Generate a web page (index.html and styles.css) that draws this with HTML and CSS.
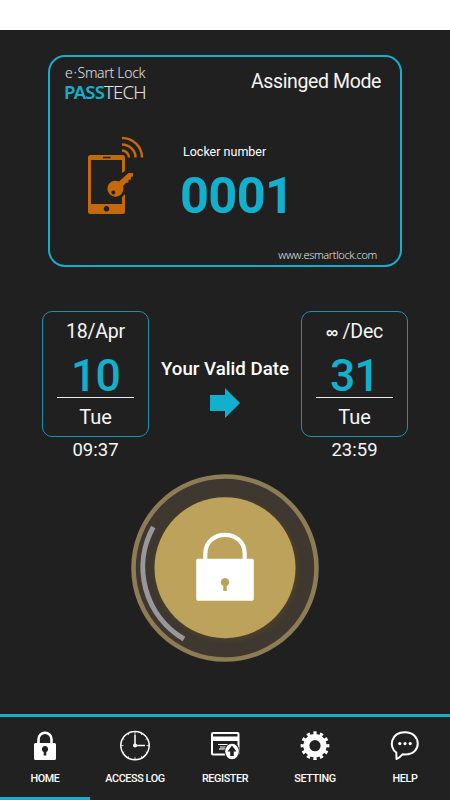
FILE: index.html
```html
<!DOCTYPE html>
<html lang="en">
<head>
<meta charset="utf-8">
<meta name="viewport" content="width=device-width">
<title>e-Smart Lock</title>
<link rel="stylesheet" href="styles.css">
</head>
<body>
<div class="status"></div>
<main>
  <section class="card">
    <header class="card-top">
      <div class="brand">
        <div class="brand-sub">e<span class="dot">·</span>Smart Lock</div>
        <div class="brand-name"><b>PASS</b>TECH</div>
      </div>
      <div class="mode">Assinged Mode</div>
    </header>
    <div class="locker">
      <svg class="phone" width="58" height="80" viewBox="0 0 58 80">
        <path fill="currentColor" fill-rule="evenodd" d="M2.500 19H34.500Q37 19 37 21.500V35L34 37V24H3V68H34V61L37 58V75.500Q37 78 34.500 78H2.500Q0 78 0 75.500V21.500Q0 19 2.500 19ZM15 20.700V22.300H22.500V20.700ZM18.500 70A2.800 2.800 0 1 0 18.510 70Z"/>
        <path fill="currentColor" fill-rule="evenodd" d="M31 45.500L40.500 37H45V40.500L43 41V43.500L40.500 44V46.500L38 47L35 50A8 8 0 1 1 31 45.500ZM25.300 54.500A2 2 0 1 0 25.310 54.500Z"/>
        <path fill="none" stroke="currentColor" stroke-width="2.500" d="M34 14.500A7 7 0 0 1 41 21.500M34 8.500A14 13 0 0 1 47.500 21.500M34 2A20 19.500 0 0 1 54 21.500"/>
      </svg>
      <div class="locker-info">
        <div class="locker-label">Locker number</div>
        <div class="locker-no">0001</div>
      </div>
    </div>
    <div class="url">www.esmartlock.com</div>
  </section>

  <section class="dates">
    <div class="date">
      <div class="date-box">
        <div class="month">18/Apr</div>
        <div class="day">10</div>
        <div class="weekday">Tue</div>
      </div>
      <div class="time">09:37</div>
    </div>
    <div class="valid">
      <div class="valid-text">Your Valid Date</div>
      <svg width="30" height="30" viewBox="0 0 30 30"><path fill="#13b0cd" d="M0 7H15V0L30 15L15 30V23H0Z"/></svg>
    </div>
    <div class="date">
      <div class="date-box">
        <div class="month"><span class="infinity">∞</span> /Dec</div>
        <div class="day">31</div>
        <div class="weekday">Tue</div>
      </div>
      <div class="time">23:59</div>
    </div>
  </section>

  <svg class="lock-button" width="190" height="190" viewBox="0 0 190 190">
    <defs>
      <filter id="glow" x="-20%" y="-20%" width="140%" height="140%"><feGaussianBlur stdDeviation="3"/></filter>
    </defs>
    <circle cx="95" cy="95" r="91.500" fill="#3e3830" stroke="#8e7c55" stroke-width="4.600"/>
    <circle cx="96.500" cy="96.500" r="70" fill="#66531f" opacity=".5" filter="url(#glow)"/>
    <circle cx="95" cy="94.700" r="70.500" fill="#bda25c"/>
    <path fill="none" stroke="#98979a" stroke-width="5" d="M23.300 54A83 83 0 0 0 54 166"/>
    <path fill="none" stroke="#fff" stroke-width="4.200" d="M75.300 87V81C75.300 55.500 114.700 55.500 114.700 81V87"/>
    <rect x="66.200" y="85.800" width="57.600" height="42" rx="1.800" fill="#fff"/>
    <path fill="#bda25c" d="M93.300 113A4.200 4.200 0 1 1 96.700 113V118H93.300Z"/>
  </svg>
</main>

<nav>
  <a class="tab active">
    <svg width="32" height="32" viewBox="0 0 32 32">
      <path fill="none" stroke="#fff" stroke-width="2.600" d="M9.500 14V9.200A6.500 6.500 0 0 1 22.500 9.200V14"/>
      <path fill="#fff" fill-rule="evenodd" d="M6.500 13H25.500Q27 13 27 14.500V28.500Q27 30 25.500 30H6.500Q5 30 5 28.500V14.500Q5 13 6.500 13ZM14.700 22V25.500H17.300V22A3.100 3.100 0 1 0 14.700 22Z"/>
    </svg>
    <span>HOME</span>
  </a>
  <a class="tab">
    <svg width="32" height="32" viewBox="0 0 32 32" fill="none" stroke="#fff">
      <circle cx="16" cy="15.600" r="14.200" stroke-width="1.500"/>
      <path stroke-width="1.500" d="M16 4.500V15.600H26"/>
      <path stroke-width="1" opacity=".75" d="M16 2V4M16 27V29.500M2 15.600H4.500M27.500 15.600H30M9 3.500L9.700 5M23 3.500L22.300 5M4 8.600L5.300 9.400M28 8.600L26.700 9.400M4 22.600L5.300 21.800M28 22.600L26.700 21.800M9 27.700L9.700 26.200M23 27.700L22.300 26.200"/>
      <circle cx="16" cy="15.600" r="2" fill="#fff" stroke="none"/>
    </svg>
    <span>ACCESS LOG</span>
  </a>
  <a class="tab">
    <svg width="32" height="32" viewBox="0 0 32 32">
      <rect x="3" y="3" width="26.500" height="21.500" rx="1" fill="none" stroke="#fff" stroke-width="2"/>
      <path fill="#fff" d="M3 6.500H29V11H3Z"/>
      <path stroke="#fff" stroke-width="1.200" d="M9 14.500H19M11 17H18"/>
      <path stroke="#fff" stroke-width="1.200" d="M10 19H16"/>
      <ellipse cx="23" cy="21.500" rx="7.700" ry="8.700" fill="#212121"/>
      <ellipse cx="23" cy="21.500" rx="6.800" ry="7.800" fill="#fff"/>
      <path fill="#212121" d="M23 15.500L27.500 21.500H24.800V26H21.200V21.500H18.500Z"/>
    </svg>
    <span>REGISTER</span>
  </a>
  <a class="tab">
    <svg width="32" height="32" viewBox="0 0 32 32" fill="none" stroke="#fff">
      <circle cx="16" cy="15.700" r="8.600" stroke-width="6"/>
      <circle cx="16" cy="15.700" r="12.200" stroke-width="4.300" pathLength="24" stroke-dasharray="1 1" stroke-dashoffset=".5"/>
    </svg>
    <span>SETTING</span>
  </a>
  <a class="tab">
    <svg width="32" height="32" viewBox="0 0 32 32">
      <path fill="none" stroke="#fff" stroke-width="2" stroke-linejoin="round" d="M7.300 22.500C-.5 17.500 1.500 2.300 16 2.300C32.500 2.300 33.500 24.500 16 24.500L13.500 24.300C11.500 26.500 10 28 7.500 29Z"/>
      <g fill="#fff"><circle cx="10.800" cy="13.600" r="1.600"/><circle cx="16" cy="13.600" r="1.600"/><circle cx="21.200" cy="13.600" r="1.600"/></g>
    </svg>
    <span>HELP</span>
  </a>
</nav>
</body>
</html>
```

FILE: styles.css
```css
* { box-sizing: border-box; }

body {
  margin: 0;
  width: 450px;
  height: 800px;
  display: flex;
  flex-direction: column;
  overflow: hidden;
  background: #202020;
  color: #f5f5f5;
  font-family: Roboto, "Liberation Sans", sans-serif;
}

svg { display: block; flex: none; }

.status { height: 30px; background: #fff; flex: none; }

main {
  flex: 1;
  display: flex;
  flex-direction: column;
  align-items: center;
  padding-top: 25px;
}

.card {
  width: 354px;
  height: 212px;
  border: 2px solid #13b0cd;
  border-radius: 17px;
  display: flex;
  flex-direction: column;
}

.card-top {
  display: flex;
  justify-content: space-between;
  padding: 7px 19px 0 14px;
  height: 79px;
}

.brand {
  font-family: "Noto Sans", "Open Sans", sans-serif;
  font-weight: 300;
  color: #e2e2e2;
  white-space: nowrap;
}
.brand-sub { font-size: 14px; line-height: 18px; padding-left: 1px; letter-spacing: -0.3px; }
.dot { margin: 0 1px; }
.brand-name { font-size: 18.500px; line-height: 19px; letter-spacing: -0.8px; }
.brand-name b { font-weight: 600; color: #13b0cd; }

.mode { font-size: 19.500px; line-height: 24px; padding-top: 6px; letter-spacing: -0.38px; }

.locker { display: flex; padding-left: 38px; height: 104px; }
.phone { color: #c46a0a; }
.locker-info { margin-left: 37px; }
.locker-label { font-size: 12.500px; line-height: 16px; padding-top: 8px; color: #fff; }
.locker-no {
  margin-left: -3px;
  padding-top: 8px;
  font-size: 50.500px;
  line-height: 56px;
  font-weight: 700;
  letter-spacing: -0.6px;
  color: #13b0cd;
}

.url {
  align-self: flex-end;
  margin: 7px 23px 0 0;
  font-family: "Open Sans", "Noto Sans", sans-serif;
  font-size: 11px;
  line-height: 16px;
  font-weight: 300;
  letter-spacing: -0.33px;
  color: #f2f2f2;
}

.dates {
  display: flex;
  width: 366px;
  margin-top: 44px;
  justify-content: space-between;
}
.date { width: 107px; text-align: center; }
.date-box {
  height: 126px;
  border: 1.500px solid #1596ad;
  border-radius: 10px;
  padding: 8px 14px 0;
}
.month { height: 24px; font-size: 19.500px; line-height: 24px; letter-spacing: -0.2px; }
.infinity { font-family: "Liberation Sans", sans-serif; font-size: 17px; font-weight: 700; line-height: 1; }
.day {
  height: 54px;
  padding-top: 8px;
  border-bottom: 1.500px solid #eee;
  color: #13b0cd;
  font-size: 44.500px;
  line-height: 48px;
  font-weight: 500;
  letter-spacing: -0.8px;
}
.weekday { font-size: 20px; line-height: 24px; padding-top: 7px; }
.time { font-size: 18.500px; line-height: 24px; padding-top: 1px; }

.valid {
  display: flex;
  flex-direction: column;
  align-items: center;
  padding-top: 46px;
  white-space: nowrap;
}
.valid-text { font-size: 18.700px; line-height: 24px; font-weight: 500; color: #fff; margin-bottom: 7px; }

.lock-button { margin-top: 11px; }

nav {
  flex: none;
  height: 86px;
  border-top: 3px solid #13b0cd;
  background: #212121;
  display: flex;
}
.tab {
  flex: 1;
  display: flex;
  flex-direction: column;
  align-items: center;
  padding-top: 13px;
  border-bottom: 3px solid transparent;
  font-size: 10.800px;
  line-height: 14px;
  font-weight: 500;
  letter-spacing: -0.4px;
  color: #fff;
}
.tab span { margin-top: 10px; white-space: nowrap; }
.tab.active { border-bottom-color: #13b0cd; }
```
